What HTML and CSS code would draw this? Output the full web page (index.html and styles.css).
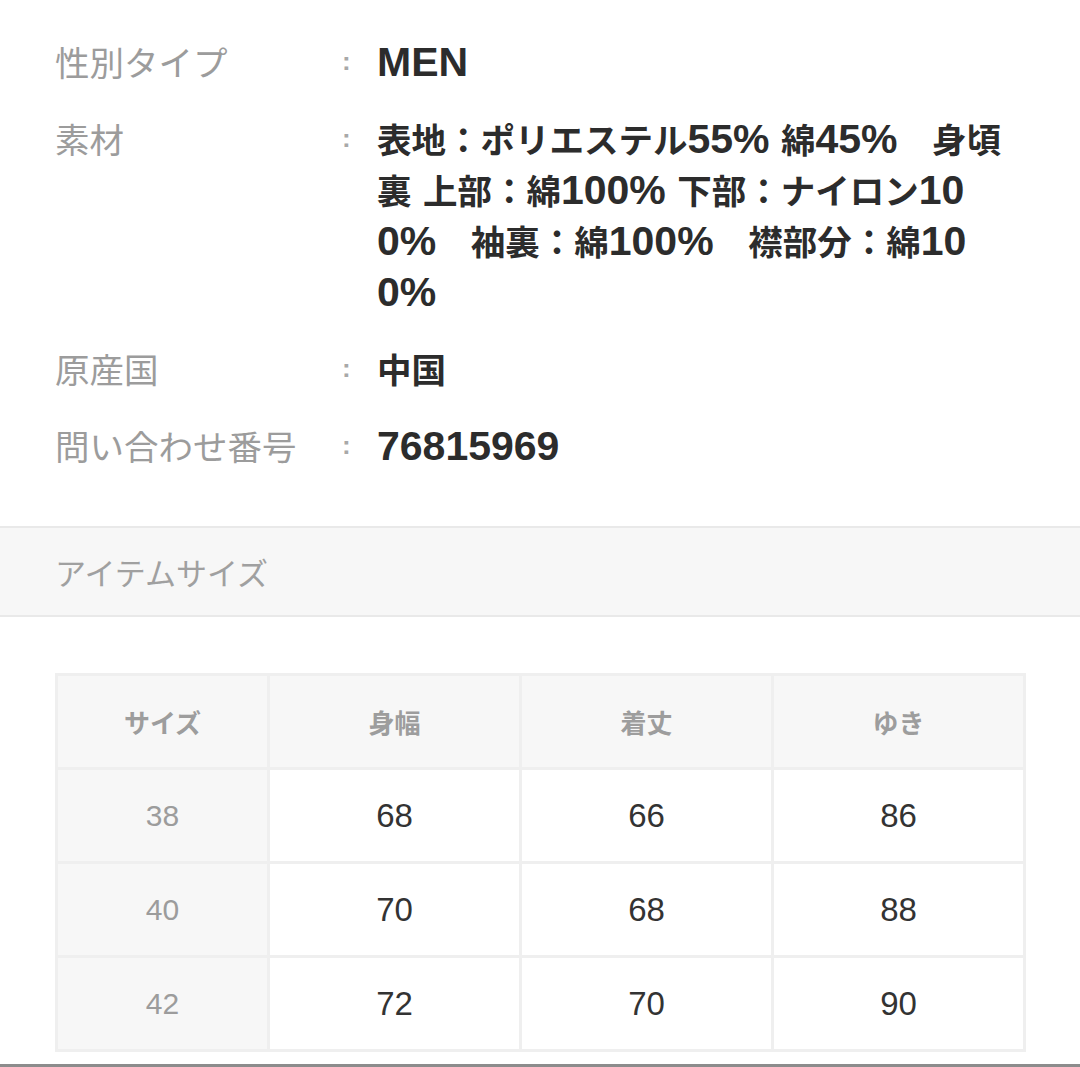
FILE: index.html
```html
<!DOCTYPE html>
<html lang="ja">
<head>
<meta charset="utf-8">
<title>商品詳細</title>
<link rel="stylesheet" href="styles.css">
</head>
<body>
<section class="specs">
  <div class="row">
    <div class="label">性別タイプ</div>
    <div class="colon">:</div>
    <div class="value"><span class="en">MEN</span></div>
  </div>
  <div class="row">
    <div class="label">素材</div>
    <div class="colon">:</div>
    <div class="value">表地：ポリエステル<span class="en">55% </span>綿<span class="en">45%</span>　身頃<br>裏<span class="en"> </span>上部：綿<span class="en">100% </span>下部：ナイロン<span class="en">10</span><br><span class="en">0%</span>　袖裏：綿<span class="en">100%</span>　襟部分：綿<span class="en">10</span><br><span class="en">0%</span></div>
  </div>
  <div class="row">
    <div class="label">原産国</div>
    <div class="colon">:</div>
    <div class="value">中国</div>
  </div>
  <div class="row">
    <div class="label">問い合わせ番号</div>
    <div class="colon">:</div>
    <div class="value"><span class="en">76815969</span></div>
  </div>
</section>

<div class="band">アイテムサイズ</div>

<div class="table-wrap">
  <table class="sizes">
    <thead>
      <tr><th class="first">サイズ</th><th>身幅</th><th>着丈</th><th>ゆき</th></tr>
    </thead>
    <tbody>
      <tr><th class="first">38</th><td>68</td><td>66</td><td>86</td></tr>
      <tr><th class="first">40</th><td>70</td><td>68</td><td>88</td></tr>
      <tr><th class="first">42</th><td>72</td><td>70</td><td>90</td></tr>
    </tbody>
  </table>
</div>
<div class="bottom-rule"></div>
</body>
</html>
```

FILE: styles.css
```css
html, body {
  margin: 0;
  padding: 0;
  background: #ffffff;
}
body {
  width: 1080px;
  height: 1067px;
  overflow: hidden;
  font-family: "Noto Sans CJK JP", sans-serif;
  color: #333333;
}
.specs {
  display: flex;
  flex-direction: column;
  gap: 26px;
  padding: 36px 0 0 55px;
}
.row {
  display: grid;
  grid-template-columns: 287px 35px 1fr;
  font-size: 34.5px;
  line-height: 51px;
}
.label {
  color: #9c9c9c;
  font-weight: 400;
}
.colon {
  color: #a8a8a8;
  font-family: "Liberation Sans", sans-serif;
  font-weight: 700;
  font-size: 26px;
}
.value {
  color: #2c2c2c;
  font-weight: 700;
  white-space: nowrap;
}
.en {
  font-family: "Liberation Sans", "Noto Sans CJK JP", sans-serif;
  font-size: 41px;
  line-height: 1;
}
.band {
  margin-top: 55px;
  height: 87px;
  border-top: 2px solid #e9e9e9;
  border-bottom: 2px solid #e9e9e9;
  background: #f7f7f7;
  padding-left: 55px;
  display: flex;
  align-items: center;
  font-size: 31px;
  color: #a0a0a0;
}
.table-wrap {
  padding: 56px 0 0 55px;
}
.sizes {
  border-collapse: collapse;
  width: 971px;
  table-layout: fixed;
}
.sizes th, .sizes td {
  border: 3px solid #efefef;
  height: 91px;
  text-align: center;
  padding: 0;
}
.sizes th:nth-child(1) { width: 209px; }
.sizes thead th {
  background: #f7f7f7;
  color: #9d9d9d;
  font-weight: 700;
  font-size: 26px;
}
.sizes tbody th {
  background: #f7f7f7;
  color: #9c9c9c;
  font-family: "Liberation Sans", sans-serif;
  font-weight: 400;
  font-size: 30px;
}
.sizes td {
  background: #ffffff;
  color: #333333;
  font-family: "Liberation Sans", sans-serif;
  font-size: 33px;
}
.bottom-rule {
  margin-top: 12px;
  border-top: 3px solid #8c8c8c;
}
```
